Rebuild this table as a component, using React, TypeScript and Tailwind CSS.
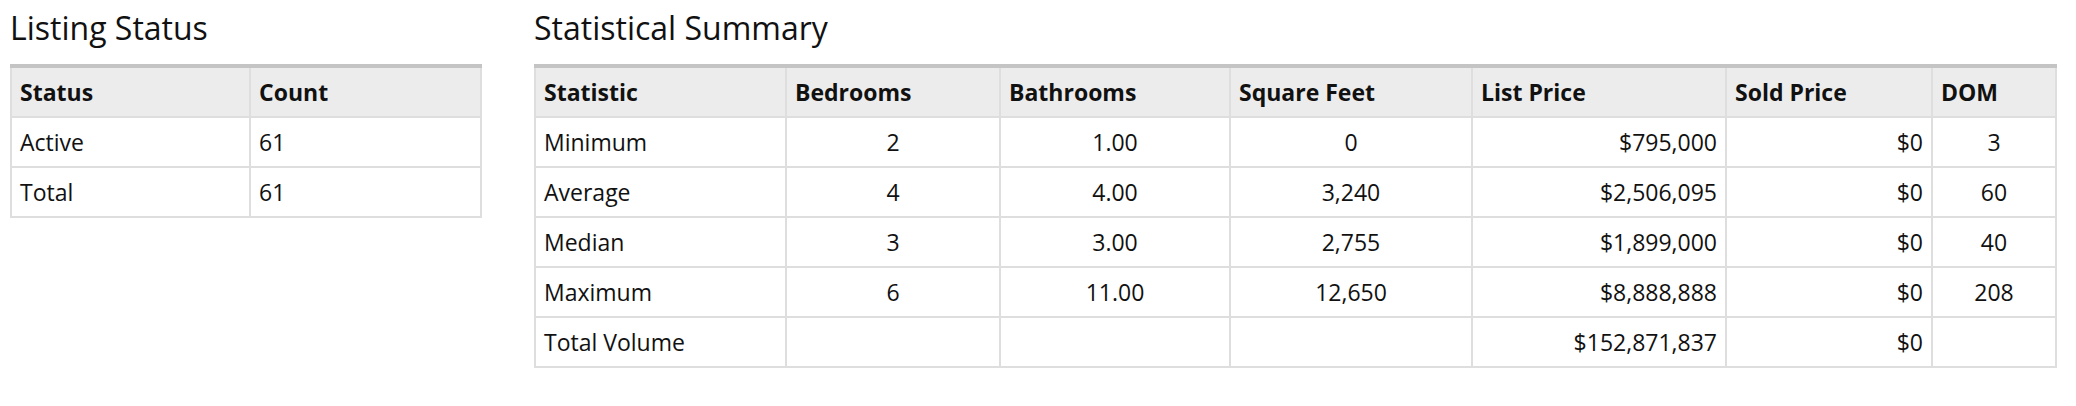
const statusRows = [
  ["Active", "61"],
  ["Total", "61"],
];

const summaryRows = [
  ["Minimum", "2", "1.00", "0", "$795,000", "$0", "3"],
  ["Average", "4", "4.00", "3,240", "$2,506,095", "$0", "60"],
  ["Median", "3", "3.00", "2,755", "$1,899,000", "$0", "40"],
  ["Maximum", "6", "11.00", "12,650", "$8,888,888", "$0", "208"],
  ["Total Volume", "", "", "", "$152,871,837", "$0", ""],
];

const headers = ["Statistic", "Bedrooms", "Bathrooms", "Square Feet", "List Price", "Sold Price", "DOM"];
const widths = ["w-[251px]", "w-[214px]", "w-[230px]", "w-[242px]", "w-[254px]", "w-[206px]", "w-[124px]"];
const aligns = ["text-left", "text-center", "text-center", "text-center", "text-right", "text-right", "text-center"];

const th = "border-2 border-[#dedede] bg-[#ececec] px-[8px] h-[51px] text-left font-bold";
const td = "border-2 border-[#dedede] px-[8px] h-[50px]";

export default function App() {
  return (
    <div className="flex gap-[54px] pl-[10px] pt-[6px] font-['Open_Sans',sans-serif] text-[23px] leading-[30px] text-[#111]">
      {/* Listing Status */}
      <section className="w-[470px] shrink-0">
        <h2 className="text-[32px] leading-[44px] mb-[14px]">Listing Status</h2>
        <table className="w-full table-fixed border-collapse border-t-4 border-t-[#c4c4c4]">
          <colgroup>
            <col className="w-[239px]" />
            <col className="w-[231px]" />
          </colgroup>
          <thead>
            <tr>
              <th className={th}>Status</th>
              <th className={th}>Count</th>
            </tr>
          </thead>
          <tbody>
            {statusRows.map((r) => (
              <tr key={r[0]}>
                <td className={td}>{r[0]}</td>
                <td className={td}>{r[1]}</td>
              </tr>
            ))}
          </tbody>
        </table>
      </section>

      {/* Statistical Summary */}
      <section className="w-[1521px] shrink-0">
        <h2 className="text-[32px] leading-[44px] mb-[14px]">Statistical Summary</h2>
        <table className="w-full table-fixed border-collapse border-t-4 border-t-[#c4c4c4]">
          <colgroup>
            {widths.map((w, i) => (
              <col key={i} className={w} />
            ))}
          </colgroup>
          <thead>
            <tr>
              {headers.map((h) => (
                <th key={h} className={th}>
                  {h}
                </th>
              ))}
            </tr>
          </thead>
          <tbody>
            {summaryRows.map((r) => (
              <tr key={r[0]}>
                {r.map((c, i) => (
                  <td key={i} className={`${td} ${aligns[i]}`}>
                    {c}
                  </td>
                ))}
              </tr>
            ))}
          </tbody>
        </table>
      </section>
    </div>
  );
}
